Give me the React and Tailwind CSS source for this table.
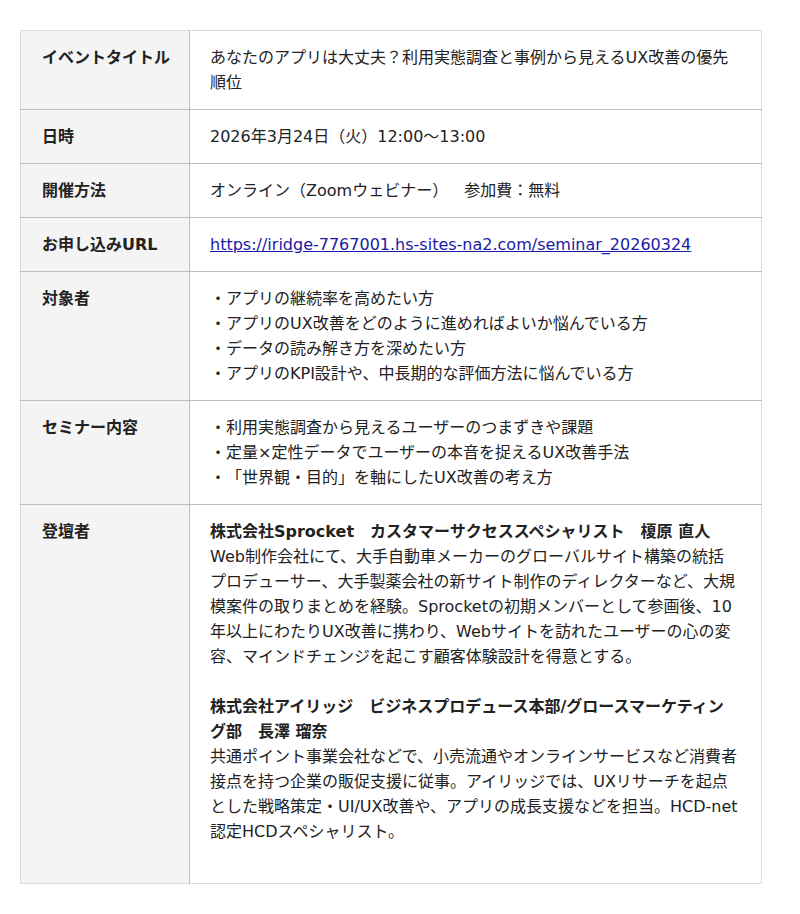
const ROWS = [
  {
    label: 'イベントタイトル',
    body: <>あなたのアプリは大丈夫？利用実態調査と事例から見えるUX改善の優先順位</>,
  },
  { label: '日時', body: <>2026年3月24日（火）12:00〜13:00</> },
  { label: '開催方法', body: <>オンライン（Zoomウェビナー）　参加費：無料</> },
  {
    label: 'お申し込みURL',
    body: (
      <a href="#" className="text-[#1a1aa6] underline">
        https://iridge-7767001.hs-sites-na2.com/seminar_20260324
      </a>
    ),
  },
  {
    label: '対象者',
    body: (
      <>
        ・アプリの継続率を高めたい方<br />
        ・アプリのUX改善をどのように進めればよいか悩んでいる方<br />
        ・データの読み解き方を深めたい方<br />
        ・アプリのKPI設計や、中長期的な評価方法に悩んでいる方
      </>
    ),
  },
  {
    label: 'セミナー内容',
    body: (
      <>
        ・利用実態調査から見えるユーザーのつまずきや課題<br />
        ・定量×定性データでユーザーの本音を捉えるUX改善手法<br />
        ・「世界観・目的」を軸にしたUX改善の考え方
      </>
    ),
  },
  {
    label: '登壇者',
    body: (
      <>
        <strong className="font-bold">株式会社Sprocket　カスタマーサクセススペシャリスト　榎原 直人</strong><br />
        Web制作会社にて、大手自動車メーカーのグローバルサイト構築の統括プロデューサー、大手製薬会社の新サイト制作のディレクターなど、大規模案件の取りまとめを経験。Sprocketの初期メンバーとして参画後、10年以上にわたりUX改善に携わり、Webサイトを訪れたユーザーの心の変容、マインドチェンジを起こす顧客体験設計を得意とする。<br />
        <br />
        <strong className="font-bold">株式会社アイリッジ　ビジネスプロデュース本部/グロースマーケティング部　長澤 瑠奈</strong><br />
        共通ポイント事業会社などで、小売流通やオンラインサービスなど消費者接点を持つ企業の販促支援に従事。アイリッジでは、UXリサーチを起点とした戦略策定・UI/UX改善や、アプリの成長支援などを担当。HCD-net認定HCDスペシャリスト。<br />
        <br />
      </>
    ),
  },
]

export default function App() {
  return (
    <div className="bg-white px-5 pt-[30px] pb-8 font-['DejaVu_Sans','Noto_Sans_CJK_JP',sans-serif] text-[16px] leading-[25px] text-[#222] [text-spacing-trim:space-all]">
      <table className="w-[742px] border-collapse border border-[#dcdcdc]">
        <tbody>
          {ROWS.map((row) => (
            <tr key={row.label} className="border-b border-[#bdbdbd] last:border-b-[#dcdcdc]">
              <th className="w-[169px] whitespace-nowrap border-r border-[#bdbdbd] bg-[#f4f4f4] py-[14px] pl-[21px] pr-3 text-left align-top font-bold">
                {row.label}
              </th>
              <td className="py-[14px] pl-5 pr-[22px] align-top">{row.body}</td>
            </tr>
          ))}
        </tbody>
      </table>
    </div>
  )
}
